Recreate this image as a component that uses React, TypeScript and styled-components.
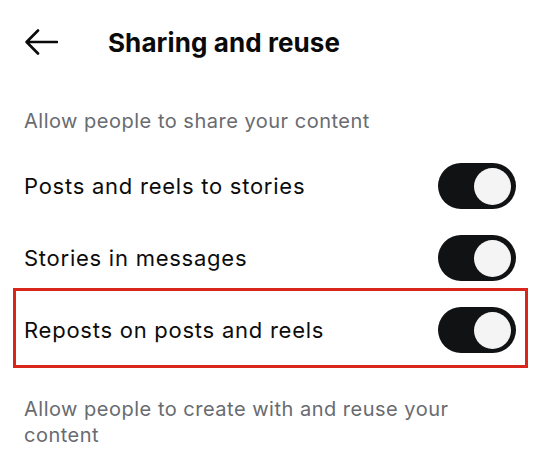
import styled, { createGlobalStyle } from "styled-components";

const GlobalStyle = createGlobalStyle`
  body {
    margin: 0;
    background: #ffffff;
    font-family: Inter, "Noto Sans", "Liberation Sans", sans-serif;
    -webkit-font-smoothing: antialiased;
  }
`;

const Screen = styled.div`
  width: 540px;
  min-height: 466px;
  background: #ffffff;
  display: flex;
  flex-direction: column;
`;

const Header = styled.header`
  height: 84px;
  display: flex;
  align-items: center;
  padding: 0 25px;
  gap: 50px;
  box-sizing: border-box;
`;

const BackButton = styled.button`
  display: flex;
  align-items: center;
  justify-content: center;
  width: 33px;
  height: 26px;
  padding: 0;
  border: 0;
  background: none;
  color: #0a0a0a;
  cursor: pointer;
`;

const Title = styled.h1`
  margin: 0;
  font-size: 26px;
  font-weight: 700;
  color: #0a0a0a;
  letter-spacing: 0.1px;
`;

const SectionTitle = styled.h2<{ $top: number }>`
  margin: 0;
  padding: ${(p) => p.$top}px 24px 16px;
  font-size: 20px;
  line-height: 26px;
  font-weight: 400;
  letter-spacing: 0.5px;
  color: #686b70;
`;

const Row = styled.label<{ $highlight?: boolean }>`
  position: relative;
  height: 72px;
  display: flex;
  align-items: center;
  justify-content: space-between;
  padding: 0 24px;
  cursor: pointer;

  ${(p) =>
    p.$highlight &&
    `
    &::after {
      content: "";
      position: absolute;
      left: 13px;
      right: 12px;
      top: -6px;
      bottom: -2px;
      border: 3px solid #d8261c;
      pointer-events: none;
    }
  `}
`;

const RowLabel = styled.span`
  font-size: 22px;
  line-height: 28px;
  letter-spacing: 0.75px;
  color: #0c0c0c;
`;

const Track = styled.span<{ $on: boolean }>`
  width: 78px;
  height: 46px;
  border-radius: 23px;
  background: ${(p) => (p.$on ? "#111214" : "#c7c9cc")};
  display: flex;
  align-items: center;
  justify-content: ${(p) => (p.$on ? "flex-end" : "flex-start")};
  padding: 0 5px;
  box-sizing: border-box;
  flex-shrink: 0;
`;

const Knob = styled.span`
  width: 37px;
  height: 37px;
  border-radius: 50%;
  background: #f4f4f4;
`;

const ArrowLeft = () => (
  <svg width="33" height="26" viewBox="0 0 33 26" fill="none">
    <path
      d="M32 13H2M13 1.5L1.6 13L13 24.5"
      stroke="currentColor"
      strokeWidth="2.6"
      strokeLinecap="round"
      strokeLinejoin="round"
    />
  </svg>
);

const Toggle = ({ on }: { on: boolean }) => (
  <Track $on={on} role="switch" aria-checked={on}>
    <Knob />
  </Track>
);

const shareOptions = [
  { label: "Posts and reels to stories", on: true },
  { label: "Stories in messages", on: true },
  { label: "Reposts on posts and reels", on: true, highlight: true },
];

export default function App() {
  return (
    <Screen>
      <GlobalStyle />
      <Header>
        <BackButton aria-label="Back">
          <ArrowLeft />
        </BackButton>
        <Title>Sharing and reuse</Title>
      </Header>

      <SectionTitle $top={24}>Allow people to share your content</SectionTitle>
      {shareOptions.map((opt) => (
        <Row key={opt.label} $highlight={opt.highlight}>
          <RowLabel>{opt.label}</RowLabel>
          <Toggle on={opt.on} />
        </Row>
      ))}

      <SectionTitle $top={30}>
        Allow people to create with and reuse your content
      </SectionTitle>
    </Screen>
  );
}
